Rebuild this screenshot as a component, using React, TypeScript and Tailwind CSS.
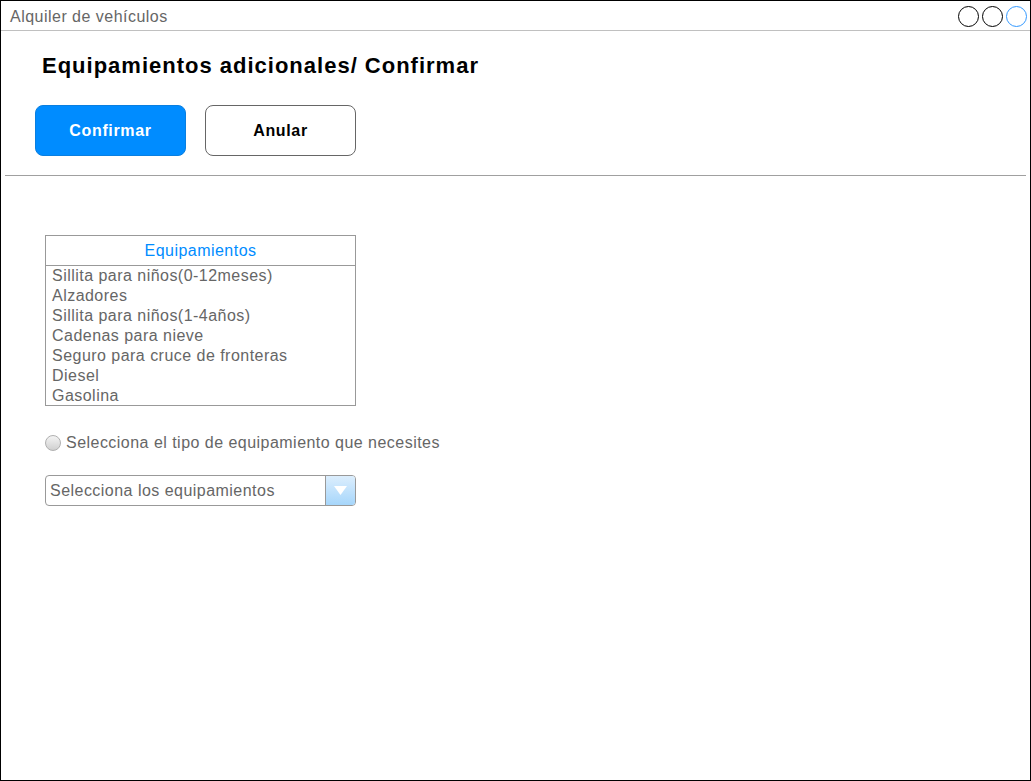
import React from 'react';

const EQUIPAMIENTOS = [
  'Sillita para niños(0-12meses)',
  'Alzadores',
  'Sillita para niños(1-4años)',
  'Cadenas para nieve',
  'Seguro para cruce de fronteras',
  'Diesel',
  'Gasolina',
];

const App: React.FC = () => {
  return (
    <div
      className="w-[1031px] h-[781px] bg-white border border-black flex flex-col overflow-hidden"
      style={{ fontFamily: '"Liberation Sans", Arial, sans-serif' }}
    >
      {/* Window title bar */}
      <div className="h-[30px] flex-none flex items-start justify-between border-b border-[#c0c0c0]">
        <span className="pl-[9px] pt-[7px] text-[16px] leading-[18px] tracking-[0.48px] text-[#666666]">Alquiler de vehículos</span>
        <div className="flex gap-[3px] pr-[3px] pt-[5px]">
          <div className="w-[21px] h-[21px] rounded-full border-[1.5px] border-black" />
          <div className="w-[21px] h-[21px] rounded-full border-[1.5px] border-black" />
          <div className="w-[21px] h-[21px] rounded-full border-[1.5px] border-[#3399ff]" />
        </div>
      </div>

      {/* Heading + actions */}
      <h1 className="mt-[22px] ml-[41px] text-[22px] leading-[26px] tracking-[1px] font-bold text-black">
        Equipamientos adicionales/ Confirmar
      </h1>
      <div className="mt-[26px] ml-[34px] flex gap-[19px]">
        <button className="w-[151px] h-[51px] rounded-[8px] bg-[#008cff] border border-[#0a7fe0] text-white text-[16px] tracking-[0.65px] font-bold">
          Confirmar
        </button>
        <button className="w-[151px] h-[51px] rounded-[8px] bg-white border border-[#666666] text-black text-[16px] tracking-[0.65px] font-bold">
          Anular
        </button>
      </div>

      <div className="mt-[19px] ml-[4px] mr-[4px] h-px bg-[#a0a0a0]" />

      {/* Equipment list */}
      <div className="mt-[59px] ml-[44px] w-[311px] border border-[#999999] flex flex-col">
        <div className="h-[30px] flex items-center justify-center border-b border-[#999999] text-[16px] tracking-[0.47px] text-[#008cff]">
          Equipamientos
        </div>
        <ul className="h-[139px] flex flex-col overflow-hidden">
          {EQUIPAMIENTOS.map(item => (
            <li key={item} className="pl-[6px] text-[16px] leading-[20px] tracking-[0.47px] text-[#666666] whitespace-nowrap">
              {item}
            </li>
          ))}
        </ul>
      </div>

      {/* Radio */}
      <label className="mt-[27px] ml-[44px] flex items-center gap-[5px]">
        <span className="w-[16px] h-[16px] rounded-full border border-[#b0b0b0] bg-gradient-to-b from-[#f4f4f4] to-[#d0d0d0]" />
        <span className="text-[16px] leading-[20px] tracking-[0.47px] text-[#666666]">Selecciona el tipo de equipamiento que necesites</span>
      </label>

      {/* Select */}
      <div className="mt-[22px] ml-[44px] w-[311px] h-[31px] flex border border-[#999999] rounded-[4px] overflow-hidden">
        <div className="flex-1 flex items-center pl-[4px] text-[16px] tracking-[0.47px] text-[#666666]">Selecciona los equipamientos</div>
        <div className="w-[30px] flex items-center justify-center border-l border-[#999999] bg-gradient-to-b from-[#dceefd] to-[#a6d6fb]">
          <svg width="13" height="9" viewBox="0 0 13 9">
            <polygon points="0,0 13,0 6.5,9" fill="#ffffff" />
          </svg>
        </div>
      </div>
    </div>
  );
};

export default App;
